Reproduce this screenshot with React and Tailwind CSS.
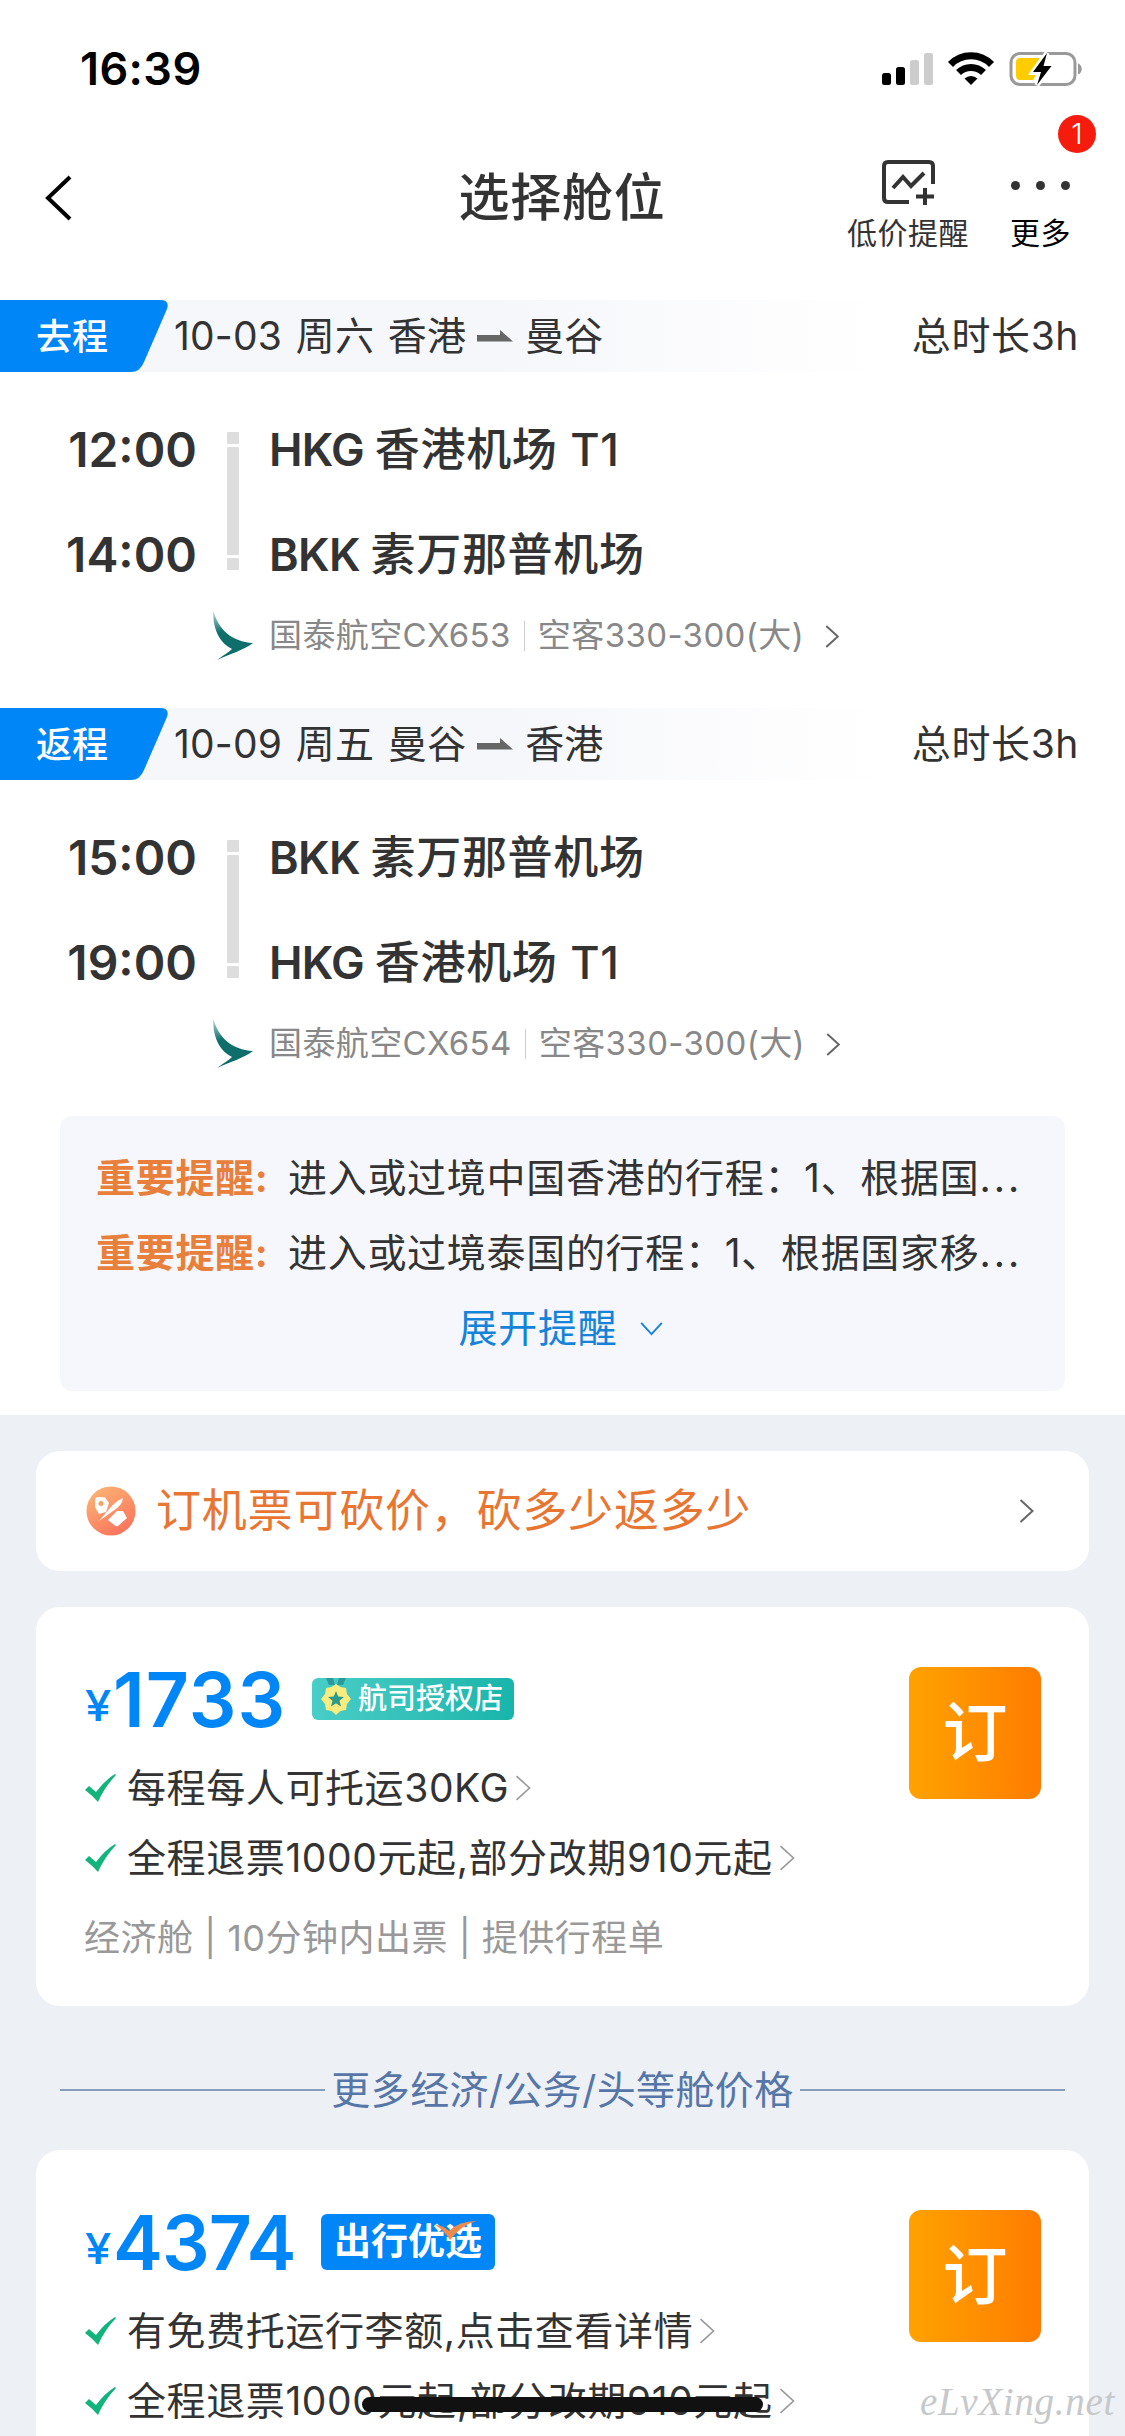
import React from 'react';

const FLIGHTS = [
  {
    tag: '去程',
    date: '10-03 周六',
    from: '香港',
    to: '曼谷',
    duration: '总时长3h',
    stops: [
      { time: '12:00', code: 'HKG', name: '香港机场 T1' },
      { time: '14:00', code: 'BKK', name: '素万那普机场' },
    ],
    flightNo: '国泰航空CX653',
    plane: '空客330-300(大)',
  },
  {
    tag: '返程',
    date: '10-09 周五',
    from: '曼谷',
    to: '香港',
    duration: '总时长3h',
    stops: [
      { time: '15:00', code: 'BKK', name: '素万那普机场' },
      { time: '19:00', code: 'HKG', name: '香港机场 T1' },
    ],
    flightNo: '国泰航空CX654',
    plane: '空客330-300(大)',
  },
];

const NOTICES = ['进入或过境中国香港的行程：1、根据国', '进入或过境泰国的行程：1、根据国家移'];

const ChevronRight = ({ className }) => (
  <svg viewBox="0 0 14 24" className={className} fill="none" stroke="currentColor">
    <path d="M1 1 L13 12 L1 23" />
  </svg>
);

const StatusBar = () => (
  <div className="flex h-[138px] items-start justify-between pl-[80px] pr-[42px] pt-[42px]">
    <span className="text-[45px] font-semibold leading-[54px] tracking-[0.4px] text-black">16:39</span>
    <div className="flex pt-[10px]">
      <svg width="202" height="36" viewBox="0 0 202 36">
        <rect x="1" y="21" width="9" height="12" rx="2.5" fill="#000" />
        <rect x="15" y="15" width="9" height="18" rx="2.5" fill="#000" />
        <rect x="29" y="8" width="9" height="25" rx="2.5" fill="#ccc" />
        <rect x="43" y="1" width="9" height="32" rx="2.5" fill="#ccc" />
        <g fill="none" stroke="#000" strokeWidth="7">
          <path d="M69.500 12.500 A28.500 28.500 0 0 1 110.500 12.500" />
          <path d="M77.500 20.500 A18 18 0 0 1 102.500 20.500" />
        </g>
        <path d="M90 33 L83.500 26.500 A9.500 9.500 0 0 1 96.500 26.500 Z" fill="#000" />
        <rect x="130" y="1.500" width="64" height="31" rx="9" fill="none" stroke="#999" strokeWidth="3" />
        <path d="M197 11.500 C202 13 202 21 197 22.500 Z" fill="#999" />
        <path d="M139 6 H159 L148 23 H155 L152 28 H139 Q135 28 135 24 V10 Q135 6 139 6 Z" fill="#ffcc00" />
        <path d="M166 1 L152 20 H160 L156 33 L170.500 14 H162.500 Z" fill="#000" stroke="#fff" strokeWidth="5" paintOrder="stroke" />
      </svg>
    </div>
  </div>
);

const Header = () => (
  <div className="relative flex h-[162px] justify-between">
    <svg width="30" height="48" viewBox="0 0 30 48" className="ml-[44px] mt-[36px]" fill="none" stroke="#000" strokeWidth="4">
      <path d="M26 3 L4 24 L26 45" />
    </svg>
    <h1 className="absolute left-0 top-[23px] w-full pr-[1px] text-center text-[51px] font-medium leading-[74px] tracking-[0.8px] text-[#333]">
      选择舱位
    </h1>
    <div className="mr-[54px] flex gap-[41px]">
      <div className="flex flex-col items-center pt-[20px]">
        <svg width="56" height="50" viewBox="0 0 56 50" fill="none" stroke="#333" strokeWidth="4" className="ml-[1px]">
          <path d="M52 26 V8 Q52 4 48 4 H7 Q3 4 3 8 V40 Q3 44 7 44 H28" />
          <path d="M12 30 L22 19 L30 28 L43 15" />
          <path d="M44 30 V47 M35 38.500 H53" />
        </svg>
        <span className="mt-[4px] text-[30px] leading-[42px] tracking-[0.5px] text-[#333]">低价提醒</span>
      </div>
      <div className="flex flex-col items-center">
        <div className="flex h-[74px] items-end gap-[16px] pb-[22px]">
          <i className="h-[9px] w-[9px] rounded-full bg-[#333]" />
          <i className="h-[9px] w-[9px] rounded-full bg-[#333]" />
          <i className="h-[9px] w-[9px] rounded-full bg-[#333]" />
        </div>
        <span className="text-[30px] leading-[42px] tracking-[0.5px] text-black">更多</span>
      </div>
    </div>
    <span className="absolute right-[29px] top-[-23px] flex h-[38px] w-[38px] items-center justify-center rounded-full bg-[#f61c0d] text-[29px] font-light text-white">
      1
    </span>
  </div>
);

const CathayLogo = () => (
  <svg width="42" height="52" viewBox="0 0 42 52" className="mt-[2px]">
    <defs>
      <linearGradient id="tail" x1="0" y1="0" x2="0.3" y2="1">
        <stop offset="0" stopColor="#b9d6d5" />
        <stop offset="0.45" stopColor="#0d6e6b" />
      </linearGradient>
    </defs>
    <path d="M0.500 0 C5 18 19 31 40 32 C31 39 17 43 4 49 C12 43 16 41 19 38 C6 32 -1 16 0.500 0 Z" fill="url(#tail)" />
  </svg>
);

const Flight = ({ flight }) => (
  <section className="h-[408px]">
    <div className="flex h-[72px] items-center bg-linear-to-r from-[#f6f7fb] from-45% to-white to-78%">
      <div className="relative h-[72px] w-[168px]">
        <svg width="168" height="72" viewBox="0 0 168 72">
          <path d="M0 0 H160 Q170 0 167 9 L144 62 Q140 72 131 72 H0 Z" fill="#0086f6" />
        </svg>
        <span className="absolute left-[36px] top-px text-[36px] font-medium leading-[72px] text-white">{flight.tag}</span>
      </div>
      <span className="ml-[6px] mt-px whitespace-pre text-[39px] tracking-[0.2px] text-[#333] [word-spacing:2.5px]">
        {flight.date + ' ' + flight.from}
      </span>
      <svg width="36" height="12" viewBox="0 0 36 12" className="ml-[11px] mr-[12px]">
        <path d="M0 5 H23 V0 L36 11.500 H0 Z" fill="#666" />
      </svg>
      <span className="mt-px text-[39px] text-[#333]">{flight.to}</span>
      <span className="ml-auto mr-[46px] mt-px text-[39px] tracking-[0.6px] text-[#333]">{flight.duration}</span>
    </div>
    <div className="flex pt-[51px]">
      <div className="flex w-[197px] flex-col items-end text-[48px] font-semibold text-[#333]">
        {flight.stops.map((s) => (
          <span key={s.time} className="h-[105px] leading-[54px]">{s.time}</span>
        ))}
      </div>
      <div className="ml-[30px] mt-[9px] flex w-[12px] flex-col gap-[3px]">
        <i className="h-[12px] rounded-[1px] bg-[#ddd]" />
        <i className="h-[108px] rounded-[1px] bg-[#ddd]" />
        <i className="h-[12px] rounded-[1px] bg-[#ddd]" />
      </div>
      <div className="ml-[30px] flex flex-col text-[45px] font-medium text-[#333]">
        {flight.stops.map((s) => (
          <span key={s.name} className="h-[105px] whitespace-pre leading-[54px] tracking-[0.7px]">
            <span className="font-semibold tracking-[-0.7px]">{s.code + ' '}</span>
            {s.name}
          </span>
        ))}
      </div>
    </div>
    <div className="-mt-[22px] flex h-[50px] items-center pl-[213px] text-[33px] text-[#888]">
      <CathayLogo />
      <span className="ml-[14px] tracking-[0.4px]">{flight.flightNo}</span>
      <i className="ml-[13px] h-[30px] w-px bg-[#ccc]" />
      <span className="ml-[13px] tracking-[0.4px]">{flight.plane}</span>
      <ChevronRight className="ml-[21px] h-[23px] w-[14px] stroke-2 text-[#666]" />
    </div>
  </section>
);

const NoticeBox = () => (
  <div className="mx-[60px] flex h-[275px] flex-col rounded-[12px] bg-[#f5f7fc] pt-[25px] text-[39px] tracking-[0.7px]">
    {NOTICES.map((text) => (
      <p key={text} className="flex h-[75px] items-center whitespace-nowrap pl-[36px]">
        <span className="w-[192px] font-bold text-[#e8803c]">重要提醒:</span>
        <span className="text-[#333]">
          {text}
          <span className="tracking-[3px]">...</span>
        </span>
      </p>
    ))}
    <button className="flex h-[75px] items-center justify-center pr-[3px] text-[#1583d8]">
      展开提醒
      <svg width="23" height="15" viewBox="0 0 24 16" className="ml-[23px]" fill="none" stroke="#1583d8" strokeWidth="2">
        <path d="M1 2 L12 14 L23 2" />
      </svg>
    </button>
  </div>
);

const PromoCard = () => (
  <div className="flex h-[120px] shrink-0 items-center rounded-[24px] bg-white pl-[50px] pr-[55px]">
    <svg width="50" height="50" viewBox="0 0 50 50">
      <defs>
        <linearGradient id="promo" x1="0.2" y1="0" x2="0.8" y2="1">
          <stop offset="0" stopColor="#fdb474" />
          <stop offset="1" stopColor="#f9705c" />
        </linearGradient>
      </defs>
      <circle cx="25" cy="25" r="24.500" fill="url(#promo)" />
      <path d="M9 13 Q10 11 13 11 L19 11.500 L23 17 L20 26 L13 28 L9 21 Z" fill="#fff" />
      <circle cx="15" cy="17.500" r="2.500" fill="#fda068" />
      <path d="M37 12 Q36 20 27 25 L13 35 L24 22 Q30 15 37 12 Z" fill="#fff" />
      <path d="M31 25 L37 25 L41 32 L32 40 Q30 41 27 38 L22 34 Z" fill="#fff" />
    </svg>
    <span className="ml-[20px] text-[45px] tracking-[0.8px] text-[#e87532]">订机票可砍价，砍多少返多少</span>
    <ChevronRight className="ml-auto h-[24px] w-[15px] stroke-2 text-[#666]" />
  </div>
);

const StoreBadge = () => (
  <span className="absolute left-[226px] top-[11px] flex h-[42px] w-[202px] items-center overflow-hidden rounded-[6px] bg-linear-to-r from-[#48cdc7] to-[#16b5ab] text-[29px] font-medium text-white">
    <svg width="32" height="42" viewBox="0 0 32 42" className="ml-[8px]">
      <path d="M6 0 H13 L15 7 H9 Z M26 0 H19 L17 7 H23 Z" fill="#2b9a9c" />
      <path
        d="M16 6 L20.500 9 L26 10 L27 16 L31 21 L27 26 L26 32 L20.500 33 L16 37 L11.500 33 L6 32 L5 26 L1 21 L5 16 L6 10 L11.500 9 Z"
        fill="#f7ec7d"
      />
      <path d="M16 13 L18.200 18.500 L24 19 L19.500 22.700 L21 28.500 L16 25.300 L11 28.500 L12.500 22.700 L8 19 L13.800 18.500 Z" fill="#2b9a8c" />
    </svg>
    <span className="ml-[6px]">航司授权店</span>
  </span>
);

const SelectBadge = () => (
  <span className="absolute left-[235px] top-[4px] flex h-[56px] w-[174px] items-center rounded-[6px] bg-[#0086f6] pl-[13px] text-[37px] font-bold text-white">
    出行优选
    <svg width="42" height="20" viewBox="0 0 42 20" className="absolute left-[114px] top-[6px]">
      <path d="M0 5 Q8 5 14 11 Q24 1 42 1 Q26 5 15 20 Q9 10 0 5 Z" fill="#f08a4b" />
    </svg>
  </span>
);

const Perk = ({ children }) => (
  <div className="flex h-[70px] items-center">
    <svg width="31" height="29" viewBox="0 0 31 29" className="-ml-[1px]">
      <path d="M0 16 L4 12 L11 18 Q20 6 30 0 L31 1 Q19 14 13 28 Q8 22 0 16 Z" fill="#13b37c" />
    </svg>
    <span className="ml-[11px] text-[39px] tracking-[0.6px] text-[#333]">{children}</span>
    <ChevronRight className="ml-[6px] h-[26px] w-[16px] stroke-[1.500] text-[#999]" />
  </div>
);

const FareCard = ({ price, badge, perks, note }) => (
  <div className="flex h-[399px] shrink-0 justify-between rounded-[24px] bg-white pl-[50px] pr-[48px] pt-[60px]">
    <div>
      <div className="relative flex h-[64px] items-center text-[#0086f6]">
        <span className="-ml-[1px] mt-[12px] w-[28px] origin-left scale-x-110 text-[43px] font-medium">¥</span>
        <span className="mt-[2px] text-[75px] font-semibold leading-[64px]">{price}</span>
        {badge}
      </div>
      <div className="mt-[22px]">
        {perks.map((perk) => (
          <Perk key={perk}>{perk}</Perk>
        ))}
      </div>
      {note && <p className="-ml-[2px] mt-[18px] text-[36px] leading-[54px] tracking-[0.5px] text-[#999]">{note}</p>}
    </div>
    <button className="flex h-[132px] w-[132px] items-center justify-center rounded-[12px] bg-linear-to-r from-[#ffa200] to-[#ff7c00] text-[65px] font-medium text-white">
      订
    </button>
  </div>
);

export default function App() {
  return (
    <div className="relative h-[2436px] w-[1125px] overflow-hidden bg-white font-['Inter','Noto_Sans_CJK_SC',sans-serif]">
      <StatusBar />
      <Header />
      {FLIGHTS.map((flight) => (
        <Flight key={flight.tag} flight={flight} />
      ))}
      <NoticeBox />
      <div className="mt-[24px] flex h-[1021px] flex-col bg-[#edf0f5] px-[36px] pt-[36px]">
        <PromoCard />
        <div className="mt-[36px] shrink-0">
          <FareCard
            price={<span className="tracking-[1px]">1733</span>}
            badge={<StoreBadge />}
            perks={['每程每人可托运30KG', '全程退票1000元起,部分改期910元起']}
            note="经济舱 | 10分钟内出票 | 提供行程单"
          />
        </div>
        <div className="mx-[24px] flex h-[144px] shrink-0 items-center pt-[24px] text-[39px] tracking-[0.4px] text-[#5676a8]">
          <i className="h-[2px] flex-1 bg-[#879bbd]" />
          <span className="mx-[6px]">更多经济/公务/头等舱价格</span>
          <i className="h-[2px] flex-1 bg-[#879bbd]" />
        </div>
        <FareCard
          price={<span className="tracking-[-1px]">4374</span>}
          badge={<SelectBadge />}
          perks={['有免费托运行李额,点击查看详情', '全程退票1000元起,部分改期910元起']}
        />
      </div>
      <div className="absolute bottom-[24px] left-[362px] h-[15px] w-[401px] rounded-full bg-[#111]" />
      <span className="absolute bottom-[9px] right-[10px] font-['Liberation_Serif',serif] text-[39px] italic leading-[50px] tracking-[0.7px] text-[#c6c8ca]">
        eLvXing.net
      </span>
    </div>
  );
}
